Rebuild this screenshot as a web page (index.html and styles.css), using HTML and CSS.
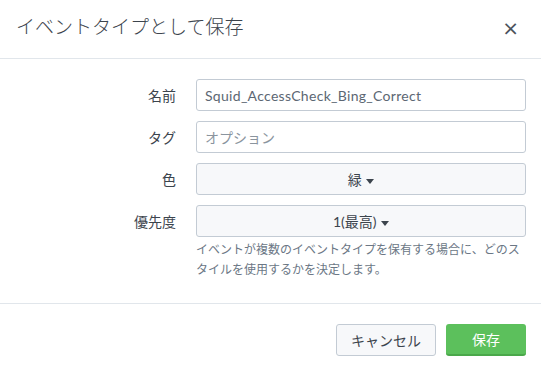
FILE: index.html
```html
<!DOCTYPE html>
<html>
  <head>
    <meta charset="utf-8" />
    <title>イベントタイプとして保存</title>
    <link rel="stylesheet" href="styles.css">
  </head>
  <body>
    <div class="modal">
      <div class="modal-header">
        <h3 class="modal-title">イベントタイプとして保存</h3>
        <button class="close">&times;</button>
      </div>

      <div class="modal-body">
        <div class="row">
          <label class="label">名前</label>
          <input class="field" type="text" value="Squid_AccessCheck_Bing_Correct" />
        </div>
        <div class="row">
          <label class="label">タグ</label>
          <input class="field" type="text" placeholder="オプション" />
        </div>
        <div class="row">
          <label class="label">色</label>
          <button class="select">緑 <span class="caret"></span></button>
        </div>
        <div class="row">
          <label class="label">優先度</label>
          <button class="select">1(最高) <span class="caret"></span></button>
        </div>
        <div class="row">
          <span></span>
          <p class="help">イベントが複数のイベントタイプを保有する場合に、どのスタイルを使用するかを決定します。</p>
        </div>
      </div>

      <div class="modal-footer">
        <button class="btn">キャンセル</button>
        <button class="btn primary">保存</button>
      </div>
    </div>
  </body>
</html>
```

FILE: styles.css
```css
body {
  margin: 0;
  background: #fff;
  color: #3c444d;
  font-family: Lato, "Noto Sans CJK JP", sans-serif;
  font-size: 14px;
}

.modal {
  width: 541px;
}

.modal-header {
  height: 58px;
  border-bottom: 1px solid #e1e6eb;
  display: flex;
  align-items: center;
  justify-content: space-between;
  padding: 0 22px 0 16px;
}

.modal-title {
  margin: 0 0 7px 0;
  font-size: 19px;
  font-weight: 300;
  color: #3c444d;
}

.close {
  border: none;
  background: none;
  padding: 0;
  font-family: "DejaVu Sans", sans-serif;
  font-size: 20px;
  font-weight: normal;
  color: #4a525c;
  line-height: 1;
  margin-top: -3px;
}

.modal-body {
  padding: 20px 15px 23px 0;
}

.row {
  display: grid;
  grid-template-columns: 176px 330px;
  column-gap: 20px;
  align-items: center;
  margin-bottom: 10px;
}

.row:last-child {
  margin-bottom: 0;
  margin-top: -7px;
}

.label {
  text-align: right;
  color: #3c444d;
}

.field {
  box-sizing: border-box;
  height: 32px;
  width: 330px;
  border: 1px solid #c3cbd4;
  border-radius: 3px;
  padding: 0 8px;
  font-family: Lato, "Noto Sans CJK JP", sans-serif;
  font-size: 14px;
  letter-spacing: 0.3px;
  color: #5c6773;
  outline: none;
}

.field::placeholder {
  color: #8a949e;
  letter-spacing: 0;
}

.select {
  box-sizing: border-box;
  height: 32px;
  width: 330px;
  border: 1px solid #c3cbd4;
  border-radius: 3px;
  background: #f7f8fa;
  font-family: Lato, "Noto Sans CJK JP", sans-serif;
  font-size: 14px;
  color: #3c444d;
}

.caret {
  display: inline-block;
  width: 0;
  height: 0;
  border-left: 4px solid transparent;
  border-right: 4px solid transparent;
  border-top: 5px solid #3c444d;
  vertical-align: middle;
  margin-left: 1px;
}

.help {
  margin: 0;
  font-size: 12px;
  line-height: 20px;
  color: #6b7785;
}

.modal-footer {
  border-top: 1px solid #e1e6eb;
  display: flex;
  justify-content: flex-end;
  gap: 10px;
  padding: 20px 15px;
}

.btn {
  box-sizing: border-box;
  height: 32px;
  width: 100px;
  border: 1px solid #c3cbd4;
  border-radius: 3px;
  background: #f7f8fa;
  font-family: Lato, "Noto Sans CJK JP", sans-serif;
  font-size: 14px;
  color: #3c444d;
}

.btn.primary {
  width: 80px;
  background: #5cc05c;
  border: none;
  border-bottom: 2px solid #4aa84a;
  color: #fff;
}
```
